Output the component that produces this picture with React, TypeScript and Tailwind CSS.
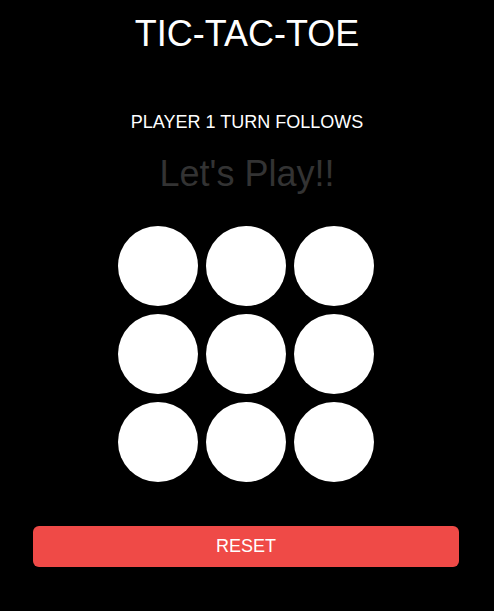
import { useState } from "react";

export default function App() {
  const [cells, setCells] = useState<(string | null)[]>(Array(9).fill(null));

  return (
    <div
      className="min-h-[611px] w-full bg-black text-white flex flex-col items-center"
      style={{ fontFamily: '"Liberation Sans", Arial, sans-serif' }}
    >
      <h1 className="mt-[14px] text-[36px] leading-[40px]">TIC-TAC-TOE</h1>
      <p className="mt-[58px] text-[18px] leading-[20px]">PLAYER 1 TURN FOLLOWS</p>
      <p className="mt-[22px] text-[36px] leading-[40px] text-[#333333]">Let's Play!!</p>

      <div className="mt-[32px] mr-[2px] grid grid-cols-3 gap-2">
        {cells.map((c, i) => (
          <button
            key={i}
            onClick={() => {
              const next = [...cells];
              next[i] = next[i] ? null : "X";
              setCells(next);
            }}
            className="w-20 h-20 rounded-full bg-white text-black text-3xl"
          >
            {c}
          </button>
        ))}
      </div>

      <div className="w-full pl-[33px] pr-[35px] mt-[44px]">
        <button
          onClick={() => setCells(Array(9).fill(null))}
          className="w-full h-[41px] rounded-md bg-[#ef4a47] text-white text-[18px]"
        >
          RESET
        </button>
      </div>
    </div>
  );
}
